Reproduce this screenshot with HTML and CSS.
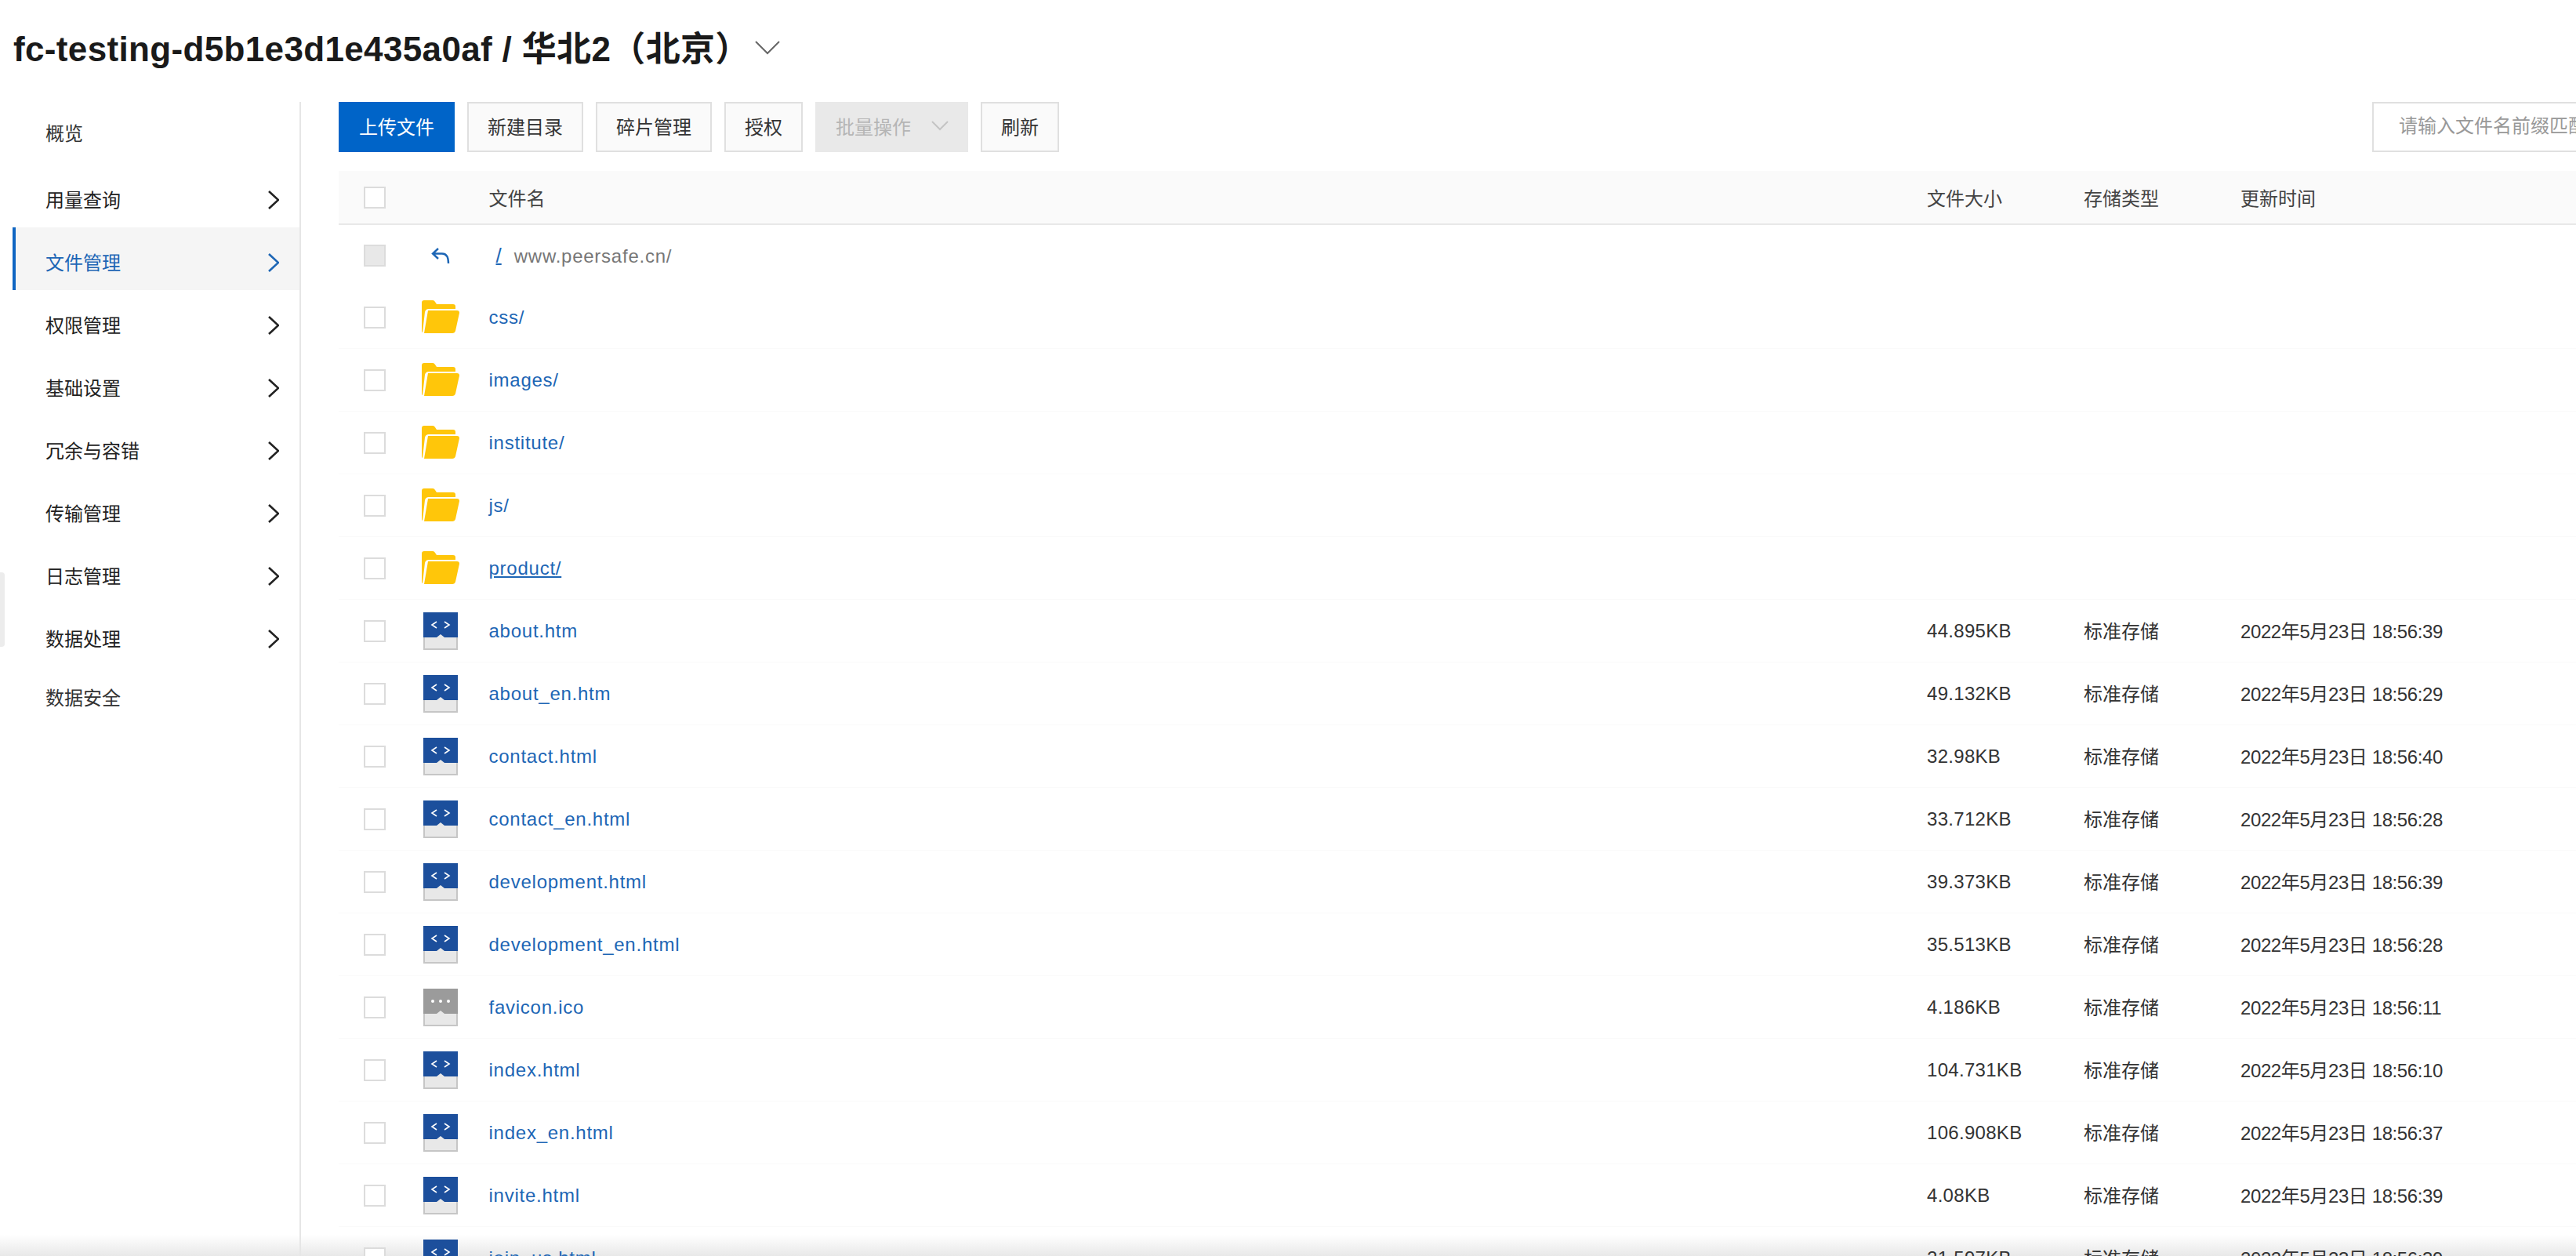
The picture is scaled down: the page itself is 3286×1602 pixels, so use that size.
FILE: index.html
```html
<!DOCTYPE html>
<html lang="en">
<head>
    <meta charset="UTF-8">
    <title>Bucket Files</title>
    <link rel="stylesheet" href="styles.css">
</head>
<body>
    <div class="side-handle"></div>
    <div class="bottom-fade"></div>

    <h1 class="page-title">
        <span>fc-testing-d5b1e3d1e435a0af / 华北2（北京）</span>
        <svg class="title-caret" width="32" height="18" viewBox="0 0 32 18"><path d="M1 1l15 15L31 1" fill="none" stroke="#666" stroke-width="2"/></svg>
    </h1>

    <div class="layout">
        <nav class="sidebar">
            <div class="nav-item"><span class="nav-label">概览</span></div>
            <div class="nav-item nav-group"><span class="nav-label">用量查询</span><svg class="chevron" viewBox="0 0 14 24"><path d="M1 1l12 11L1 23"/></svg></div>
            <div class="nav-item nav-group active"><span class="nav-label">文件管理</span><svg class="chevron" viewBox="0 0 14 24"><path d="M1 1l12 11L1 23"/></svg></div>
            <div class="nav-item nav-group"><span class="nav-label">权限管理</span><svg class="chevron" viewBox="0 0 14 24"><path d="M1 1l12 11L1 23"/></svg></div>
            <div class="nav-item nav-group"><span class="nav-label">基础设置</span><svg class="chevron" viewBox="0 0 14 24"><path d="M1 1l12 11L1 23"/></svg></div>
            <div class="nav-item nav-group"><span class="nav-label">冗余与容错</span><svg class="chevron" viewBox="0 0 14 24"><path d="M1 1l12 11L1 23"/></svg></div>
            <div class="nav-item nav-group"><span class="nav-label">传输管理</span><svg class="chevron" viewBox="0 0 14 24"><path d="M1 1l12 11L1 23"/></svg></div>
            <div class="nav-item nav-group"><span class="nav-label">日志管理</span><svg class="chevron" viewBox="0 0 14 24"><path d="M1 1l12 11L1 23"/></svg></div>
            <div class="nav-item nav-group"><span class="nav-label">数据处理</span><svg class="chevron" viewBox="0 0 14 24"><path d="M1 1l12 11L1 23"/></svg></div>
            <div class="nav-item"><span class="nav-label">数据安全</span></div>
        </nav>

        <main class="main">
            <div class="toolbar">
                <button class="btn btn-primary">上传文件</button>
                <button class="btn">新建目录</button>
                <button class="btn">碎片管理</button>
                <button class="btn">授权</button>
                <button class="btn btn-disabled">批量操作<svg class="btn-caret" width="22" height="13" viewBox="0 0 22 13"><path d="M1 1l10 10L21 1" fill="none" stroke="#c4c4c4" stroke-width="2"/></svg></button>
                <button class="btn">刷新</button>
                <input class="search" type="text" placeholder="请输入文件名前缀匹配">
            </div>

            <div class="file-table">
                <div class="row head">
                    <span class="check"></span><span></span><span>文件名</span><span>文件大小</span><span>存储类型</span><span>更新时间</span>
                </div>
                <div class="row path-row">
                    <span class="check check-off"></span>
                    <svg class="back-icon" width="24" height="21" viewBox="0 0 24 21"><path d="M9 1L2 7.5 9 14M2 7.5h12c5 0 8 4 8 12.5" fill="none" stroke="#1d66b5" stroke-width="2.4"/></svg>
                    <span><a class="root-link">/</a><span class="path">www.peersafe.cn/</span></span>
                </div>
                <div id="rows"></div>
            </div>
        </main>
    </div>

    <script>
        const folders = ['css/', 'images/', 'institute/', 'js/', 'product/'];
        const files = [
            ['about.htm', '44.895KB', '18:56:39'],
            ['about_en.htm', '49.132KB', '18:56:29'],
            ['contact.html', '32.98KB', '18:56:40'],
            ['contact_en.html', '33.712KB', '18:56:28'],
            ['development.html', '39.373KB', '18:56:39'],
            ['development_en.html', '35.513KB', '18:56:28'],
            ['favicon.ico', '4.186KB', '18:56:11'],
            ['index.html', '104.731KB', '18:56:10'],
            ['index_en.html', '106.908KB', '18:56:37'],
            ['invite.html', '4.08KB', '18:56:39'],
            ['join_us.html', '21.597KB', '18:56:39']
        ];

        const folderIcon = '<svg class="file-icon folder-icon" width="48" height="42" viewBox="0 0 48 42"><path d="M0 3q0-3 3-3h11q2 0 3 2l2 3h21q3 0 3 3v3H9q-4 0-5 4L1 41q-1 0-1-2z" fill="#ffc60a"/><path d="M8 13h37q3 0 3 3l-5 23q-1 3-4 3H3z" fill="#ffc60a"/></svg>';

        function fileIcon(name) {
            const isHtml = !name.endsWith('.ico');
            const top = isHtml ? '#1c4f9c' : '#9b9b9b';
            const mark = isHtml
                ? '<path d="M17 12l-6 4 6 4M27 12l6 4-6 4" fill="none" stroke="#fff" stroke-width="1.6"/>'
                : '<circle cx="12" cy="16" r="2" fill="#fff"/><circle cx="22" cy="16" r="2" fill="#fff"/><circle cx="32" cy="16" r="2" fill="#fff"/>';
            return `<svg class="file-icon" width="44" height="48" viewBox="0 0 44 48">
                <rect width="44" height="48" fill="#c6c6c6"/>
                <rect x="2" y="32" width="40" height="14" fill="#e8e8e8"/>
                <rect width="44" height="32" fill="${top}"/>
                <path d="M17 32l5-4 5 4z" fill="#e8e8e8"/>
                ${mark}
            </svg>`;
        }

        const rows = document.getElementById('rows');
        let html = '';
        folders.forEach(name => {
            const underline = name === 'product/' ? ' hovered' : '';
            html += `<div class="row"><span class="check"></span>${folderIcon}<a class="file-name${underline}">${name}</a></div>`;
        });
        files.forEach(f => {
            html += `<div class="row"><span class="check"></span>${fileIcon(f[0])}<a class="file-name">${f[0]}</a><span class="file-size">${f[1]}</span><span class="cjk-cell">标准存储</span><span class="cjk-cell file-date">2022年5月23日 ${f[2]}</span></div>`;
        });
        rows.innerHTML = html;
    </script>
</body>
</html>
```

FILE: styles.css
```css
* {
    box-sizing: border-box;
}

html, body {
    height: 100%;
}

body {
    margin: 0;
    overflow: hidden;
    background: #fff;
    color: #333;
    font-family: "Liberation Sans", "Noto Sans CJK SC", sans-serif;
    font-size: 24px;
}

.side-handle {
    position: absolute;
    left: 0;
    top: 730px;
    width: 6px;
    height: 95px;
    background: #ececec;
    border-radius: 0 4px 4px 0;
}

.page-title {
    display: flex;
    align-items: center;
    height: 130px;
    margin: 0;
    padding: 0 0 12px 17px;
    color: #1a1a1a;
    font-size: 44px;
    font-weight: 700;
    letter-spacing: 0.35px;
}

.title-caret {
    margin-left: 6px;
    margin-top: 4px;
}

.layout {
    position: relative;
    display: flex;
    padding-left: 16px;
}

.sidebar {
    width: 368px;
    height: 1472px;
    flex-shrink: 0;
    border-right: 2px solid #e6e6e6;
}

.nav-item {
    display: flex;
    align-items: center;
    justify-content: space-between;
    height: 80px;
    padding: 0 26px 0 42px;
    color: #333;
}

.nav-label {
    margin-bottom: 3px;
}

.nav-group {
    padding-top: 10px;
    color: #222;
}

.nav-item.active {
    background: #f5f5f5;
    border-left: 4px solid #0f65c2;
    padding-left: 38px;
    color: #1d66b5;
}

.chevron {
    width: 14px;
    height: 24px;
    fill: none;
    stroke: #222;
    stroke-width: 2.6;
}

.active .chevron {
    stroke: #1d66b5;
}

.main {
    width: 3014px;
    margin-left: 48px;
    flex-shrink: 0;
}

.toolbar {
    display: flex;
    gap: 16px;
    height: 88px;
}

.btn {
    height: 64px;
    padding: 0 24px 3px;
    background: #fafafa;
    border: 2px solid #e0e0e0;
    color: #333;
    font-family: inherit;
    font-size: 24px;
    white-space: nowrap;
}

.btn-primary {
    background: #0064c8;
    border-color: #0064c8;
    color: #fff;
}

.btn-disabled {
    display: flex;
    align-items: center;
    gap: 26px;
    padding-right: 23px;
    background: #e9e9e9;
    border-color: #e9e9e9;
    color: #b5b5b5;
}

.search {
    width: 420px;
    height: 64px;
    margin-left: auto;
    padding: 0 32px 3px;
    background: #fff;
    border: 2px solid #e0e0e0;
    font-family: inherit;
    font-size: 24px;
}

.search::placeholder {
    color: #999;
}

.row {
    display: grid;
    grid-template-columns: 108px 83.5px 1834.5px 200px 200px 1fr;
    align-items: center;
    height: 80px;
    border-bottom: 1px solid #fafafa;
}

.head {
    height: 69px;
    background: #fafafa;
    border-bottom: 2px solid #e8e8e8;
    color: #444;
}

.path-row {
    height: 78px;
    border-bottom: 0;
}

.check {
    display: block;
    width: 28px;
    height: 28px;
    margin-left: 32px;
    background: #fff;
    border: 2px solid #dcdcdc;
}

.check-off {
    background: #e8e8e8;
}

.back-icon {
    margin-left: 10px;
}

.file-icon {
    display: block;
}

.folder-icon {
    margin: -1px 0 0 -2px;
}

.root-link {
    margin: 0 16px 0 9px;
    color: #1d66b5;
    font-size: 26px;
    text-decoration: underline;
    text-decoration-thickness: 2px;
}

.path {
    color: #777;
    letter-spacing: 0.75px;
}

.file-name {
    color: #1d66b5;
    letter-spacing: 0.75px;
}

.hovered {
    text-decoration: underline;
}

.file-size {
    letter-spacing: 0.3px;
}

.cjk-cell {
    padding-bottom: 2px;
}

.file-date {
    letter-spacing: -0.4px;
}

.bottom-fade {
    position: absolute;
    left: 0;
    right: 0;
    bottom: 0;
    height: 27px;
    background: linear-gradient(#fff, #e8e8e8);
}
```
